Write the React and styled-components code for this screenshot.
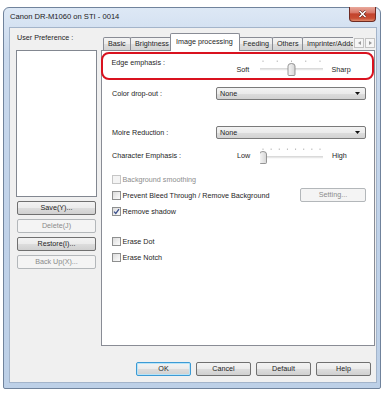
import React from 'react';
import styled, { createGlobalStyle, css } from 'styled-components';

const GlobalStyle = createGlobalStyle`
  html, body { margin: 0; padding: 0; background: #fff; }
  body {
    font-family: "Liberation Sans", Arial, sans-serif;
    font-size: 7.2px;
    color: #1e1e1e;
  }
  * { box-sizing: border-box; }
`;

const Page = styled.div`
  width: 384px;
  height: 393px;
  padding: 7px 3px 0 3px;
`;

const Window = styled.div`
  width: 378px;
  height: 382px;
  border: 1px solid #70839c;
  border-radius: 6px 6px 2px 2px;
  background: linear-gradient(180deg, #dde8f5 0%, #c9d9ed 12%, #c0d2e9 60%, #bdd0e7 100%);
  padding: 0 3px 5px 5px;
  display: flex;
  flex-direction: column;
`;

const TitleBar = styled.div`
  height: 19px;
  display: flex;
  justify-content: space-between;
  align-items: flex-start;
`;

const Title = styled.span`
  font-size: 7.6px;
  line-height: 17px;
  color: #1a1a1a;
  padding-left: 1px;
`;

const CloseButton = styled.div`
  width: 27px;
  height: 15px;
  margin: -1px 1px 0 0;
  border: 1px solid #6e2b22;
  border-top: none;
  border-radius: 0 0 4px 4px;
  background: linear-gradient(180deg, #e9a99c 0%, #d9796a 40%, #c3432d 50%, #c94d33 80%, #e08a6b 100%);
  display: flex;
  align-items: center;
  justify-content: center;
`;

const Client = styled.div`
  flex: 1;
  display: flex;
  background: #f0f0f0;
  border: 1px solid #a3b4ca;
`;

const Sidebar = styled.div`
  width: 91px;
  padding: 5px 0 0 6px;
  display: flex;
  flex-direction: column;
`;

const SideLabel = styled.div`
  line-height: 10px;
  padding-left: 1px;
`;

const ListBox = styled.div`
  width: 81px;
  height: 147px;
  margin-top: 7px;
  background: #fff;
  border: 1px solid #828790;
`;

const Button = styled.div`
  height: 14px;
  width: ${p => p.$w || 79}px;
  border: 1px solid #707070;
  border-radius: 2px;
  background: linear-gradient(180deg, #f3f3f3 0%, #ebebeb 50%, #dddddd 51%, #d0d0d0 100%);
  display: flex;
  align-items: center;
  justify-content: center;
  line-height: 12px;
  color: #1e1e1e;
  ${p => p.$disabled && css`
    border-color: #b3b7ba;
    background: #f4f4f4;
    color: #8a8a8a;
  `}
  ${p => p.$default && css`
    border-color: #3c9ad4;
    box-shadow: inset 0 0 0 1px #b8e4f8;
  `}
`;

const SideButton = styled(Button)`
  margin: 4px 0 0 1px;
`;

const Main = styled.div`
  width: 275px;
  padding: 5px 1px 0 0;
  display: flex;
  flex-direction: column;
`;

const TabRow = styled.div`
  height: 18px;
  margin-bottom: -1px;
  display: flex;
  align-items: flex-end;
  position: relative;
  z-index: 1;
`;

const TabStrip = styled.div`
  width: 252px;
  height: 18px;
  padding-left: 3px;
  display: flex;
  align-items: flex-end;
  overflow: hidden;
`;

const Tab = styled.div`
  flex: none;
  width: ${p => p.$w}px;
  height: 13px;
  margin: 0 0 1px -1px;
  border: 1px solid #898c95;
  border-bottom: none;
  border-radius: 2px 2px 0 0;
  background: linear-gradient(180deg, #f4f4f4 0%, #ececec 50%, #dedede 51%, #d4d4d4 100%);
  line-height: 12px;
  padding-left: 4px;
  white-space: nowrap;
  overflow: hidden;
  ${p => p.$active && css`
    height: 18px;
    margin: 0 -1px 0 -2px;
    background: #fff;
    line-height: 15px;
    position: relative;
    z-index: 2;
    padding-left: 5px;
  `}
`;

const ScrollArrows = styled.div`
  display: flex;
  gap: 1px;
  margin: 0 0 3px 1px;
`;

const ScrollArrow = styled.div`
  width: 10px;
  height: 10px;
  border: 1px solid #c2c2c2;
  background: #f6f6f6;
  display: flex;
  align-items: center;
  justify-content: center;
`;

const Panel = styled.div`
  height: 296px;
  background: #fff;
  border: 1px solid #898c95;
  padding: 1px 8px 0 10px;
  display: flex;
  flex-direction: column;
`;

const RedBox = styled.div`
  width: 273px;
  height: 28px;
  margin-left: -11px;
  border: 2.5px solid #d9121f;
  border-radius: 8px;
  padding: 4.5px 0 0 8.5px;
  display: flex;
  align-items: flex-start;
`;

const Row = styled.div`
  display: flex;
  align-items: ${p => p.$top ? 'flex-start' : 'center'};
  height: ${p => p.$h}px;
  margin-top: ${p => p.$mt}px;
`;

const Label = styled.div`
  width: ${p => p.$w}px;
  line-height: ${p => p.$lh || 10}px;
  margin-top: ${p => p.$mt || 0}px;
  flex: none;
`;

const SlideText = styled.div`
  width: ${p => p.$w}px;
  line-height: 18px;
  margin-top: ${p => p.$mt || 0}px;
  padding-left: ${p => p.$pl || 0}px;
  flex: none;
`;

const Combo = styled.div`
  width: 150px;
  height: 13px;
  border: 1px solid #7a7a7a;
  border-radius: 2px;
  background: linear-gradient(180deg, #f3f3f3 0%, #ebebeb 50%, #dddddd 51%, #d2d2d2 100%);
  display: flex;
  align-items: center;
  justify-content: space-between;
  padding: 0 5px 0 3px;
  line-height: 11px;
`;

const CheckRow = styled.div`
  display: flex;
  align-items: center;
  height: ${p => p.$h || 12}px;
  margin-top: ${p => p.$mt}px;
  color: ${p => p.$disabled ? '#8d8d8d' : '#1e1e1e'};
`;

const Box = styled.div`
  width: 9px;
  height: 9px;
  flex: none;
  border: 1px solid ${p => p.$disabled ? '#c6c6c6' : '#8e8f8f'};
  background: ${p => p.$disabled
    ? '#f4f4f4'
    : 'linear-gradient(135deg, #dcdcdc 0%, #f0f0f0 60%, #fbfbfb 100%)'};
  margin-right: 1.5px;
  display: flex;
  align-items: center;
  justify-content: center;
`;

const SettingButton = styled(Button)`
  margin-left: auto;
`;

const Footer = styled.div`
  margin-top: 16px;
  padding-right: 4px;
  display: flex;
  justify-content: flex-end;
  gap: 5px;
`;

const Slider = ({ ticks, pos }) => {
  const x0 = 3, x1 = 60;
  const marks = Array.from({ length: ticks }, (_, i) => x0 + (i * (x1 - x0)) / (ticks - 1));
  const tx = x0 + pos * (x1 - x0);
  return (
    <svg width="63" height="18" viewBox="0 0 63 18" style={{ flex: 'none' }}>
      {marks.map((m, i) => (
        <line key={i} x1={m} y1="1.5" x2={m} y2="3" stroke="#a8a8a8" strokeWidth="0.8" />
      ))}
      <line x1="0" y1="10" x2="63" y2="10" stroke="#b5b5b5" strokeWidth="1" />
      <line x1="0" y1="11" x2="63" y2="11" stroke="#f4f4f4" strokeWidth="1" />
      <defs>
        <linearGradient id="thumb" x1="0" y1="0" x2="1" y2="0">
          <stop offset="0" stopColor="#f6f6f6" />
          <stop offset="1" stopColor="#d6d6d6" />
        </linearGradient>
      </defs>
      <path
        d={`M${tx - 3.5} 7 Q${tx - 3.5} 4.5 ${tx} 4.5 Q${tx + 3.5} 4.5 ${tx + 3.5} 7 V15.5 Q${tx + 3.5} 16.5 ${tx + 2.5} 16.5 H${tx - 2.5} Q${tx - 3.5} 16.5 ${tx - 3.5} 15.5 Z`}
        fill="url(#thumb)"
        stroke="#7d7d7d"
        strokeWidth="0.8"
      />
    </svg>
  );
};

const Check = ({ checked, disabled }) => (
  <Box $disabled={disabled}>
    {checked && (
      <svg width="7" height="7" viewBox="0 0 7 7">
        <path d="M1 3.6 L2.8 5.4 L6 1.2" fill="none" stroke="#3b4f8a" strokeWidth="1.3" />
      </svg>
    )}
  </Box>
);

const DownArrow = () => (
  <svg width="5" height="3" viewBox="0 0 5 3">
    <path d="M0 0 H5 L2.5 3 Z" fill="#111" />
  </svg>
);

const Arrow = ({ dir }) => (
  <svg width="3" height="4" viewBox="0 0 3 4">
    <path d={dir === 'left' ? 'M3 0 V4 L0 2 Z' : 'M0 0 V4 L3 2 Z'} fill="#9a9a9a" />
  </svg>
);

const tabs = [
  { label: 'Basic', w: 28 },
  { label: 'Brightness', w: 42 },
  { label: 'Image processing', w: 70, active: true },
  { label: 'Feeding', w: 35 },
  { label: 'Others', w: 31 },
  { label: 'Imprinter/Addo', w: 56 },
];

export default function App() {
  return (
    <>
      <GlobalStyle />
      <Page>
        <Window>
          <TitleBar>
            <Title>Canon DR-M1060 on STI - 0014</Title>
            <CloseButton>
              <svg width="9" height="8" viewBox="0 0 9 8">
                <path d="M1.5 1 L7.5 7 M7.5 1 L1.5 7" stroke="#5a1a12" strokeWidth="2.6" />
                <path d="M1.5 1 L7.5 7 M7.5 1 L1.5 7" stroke="#fff" strokeWidth="1.6" />
              </svg>
            </CloseButton>
          </TitleBar>
          <Client>
            <Sidebar>
              <SideLabel>User Preference :</SideLabel>
              <ListBox />
              <SideButton>Save(Y)...</SideButton>
              <SideButton $disabled>Delete(J)</SideButton>
              <SideButton>Restore(I)...</SideButton>
              <SideButton $disabled>Back Up(X)...</SideButton>
            </Sidebar>
            <Main>
              <TabRow>
                <TabStrip>
                  {tabs.map(t => (
                    <Tab key={t.label} $w={t.w} $active={t.active}>{t.label}</Tab>
                  ))}
                </TabStrip>
                <ScrollArrows>
                  <ScrollArrow><Arrow dir="left" /></ScrollArrow>
                  <ScrollArrow><Arrow dir="right" /></ScrollArrow>
                </ScrollArrows>
              </TabRow>
              <Panel>
                <RedBox>
                  <Label $w={125} $mt={-1}>Edge emphasis :</Label>
                  <SlideText $w={23} $mt={2}>Soft</SlideText>
                  <Slider ticks={5} pos={0.5} />
                  <SlideText $w={30} $mt={2} $pl={9}>Sharp</SlideText>
                </RedBox>
                <Row $h={13} $mt={7}>
                  <Label $w={104}>Color drop-out :</Label>
                  <Combo>None<DownArrow /></Combo>
                </Row>
                <Row $h={13} $mt={26}>
                  <Label $w={104}>Moire Reduction :</Label>
                  <Combo>None<DownArrow /></Combo>
                </Row>
                <Row $h={18} $mt={8} $top>
                  <Label $w={125} $lh={18}>Character Emphasis :</Label>
                  <SlideText $w={23}>Low</SlideText>
                  <Slider ticks={8} pos={0} />
                  <SlideText $w={30} $pl={9}>High</SlideText>
                </Row>
                <CheckRow $mt={8} $disabled>
                  <Check disabled />Background smoothing
                </CheckRow>
                <CheckRow $mt={3} $h={14}>
                  <Check />Prevent Bleed Through / Remove Background
                  <SettingButton $w={66} $disabled>Setting...</SettingButton>
                </CheckRow>
                <CheckRow $mt={3}>
                  <Check checked />Remove shadow
                </CheckRow>
                <CheckRow $mt={18}>
                  <Check />Erase Dot
                </CheckRow>
                <CheckRow $mt={4}>
                  <Check />Erase Notch
                </CheckRow>
              </Panel>
              <Footer>
                <Button $w={55} $default>OK</Button>
                <Button $w={55}>Cancel</Button>
                <Button $w={55}>Default</Button>
                <Button $w={55}>Help</Button>
              </Footer>
            </Main>
          </Client>
        </Window>
      </Page>
    </>
  );
}
